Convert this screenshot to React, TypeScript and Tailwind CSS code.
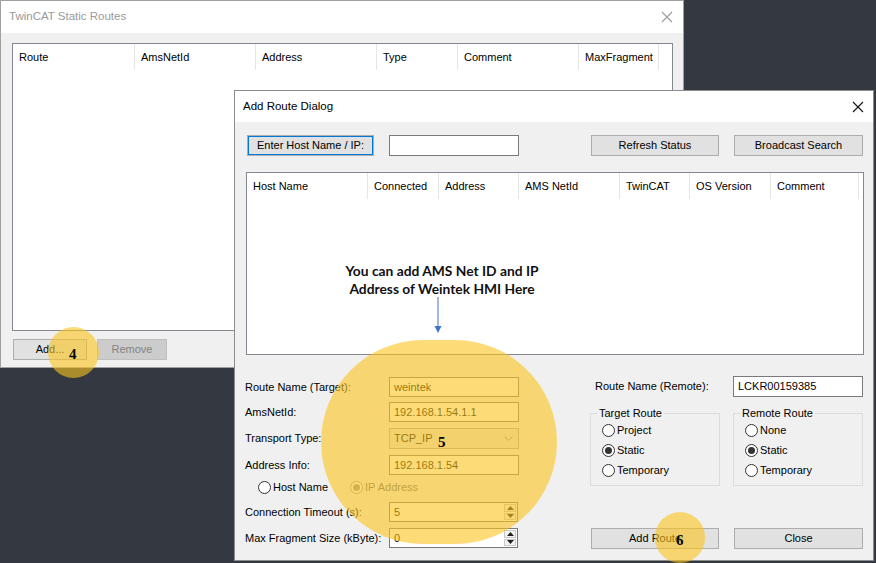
import clsx from "clsx";
import type { ReactNode } from "react";

function CloseX({ color }: { color: string }) {
  return (
    <svg width="12" height="12" viewBox="0 0 12 12">
      <path d="M1 1 L11 11 M11 1 L1 11" stroke={color} strokeWidth="1.1" fill="none" />
    </svg>
  );
}

function Btn({
  children,
  className,
  disabled,
  focused,
}: {
  children: ReactNode;
  className?: string;
  disabled?: boolean;
  focused?: boolean;
}) {
  return (
    <div
      className={clsx(
        "flex items-center justify-center h-[21px] border",
        disabled ? "bg-[#cccccc] border-[#bfbfbf] text-[#838383]" : "bg-[#e1e1e1] border-[#adadad] text-black",
        focused && "border-[#0078d7] shadow-[inset_0_0_0_1px_#0078d7]",
        className
      )}
    >
      {children}
    </div>
  );
}

function TextBox({ value, className }: { value?: string; className?: string }) {
  return (
    <div className={clsx("h-[20px] bg-white border border-[#7a7a7a] flex items-center pl-[4px]", className)}>
      {value}
    </div>
  );
}

function Radio({ label, checked, muted }: { label: string; checked?: boolean; muted?: boolean }) {
  return (
    <div className="flex items-center h-[14px] gap-[2px]">
      <span
        className={clsx(
          "w-[13px] h-[13px] rounded-full border bg-white flex items-center justify-center",
          muted ? "border-[#9a9a9a]" : "border-[#333333]"
        )}
      >
        {checked && <span className={clsx("w-[7px] h-[7px] rounded-full", muted ? "bg-[#9a9a9a]" : "bg-[#333333]")} />}
      </span>
      <span className={muted ? "text-[#6d6d6d]" : "text-black"}>{label}</span>
    </div>
  );
}

function Spin({ value }: { value: string }) {
  return (
    <div className="w-[129px] h-[20px] bg-white border border-[#7a7a7a] flex">
      <span className="flex-1 pl-[4px] flex items-center">{value}</span>
      <div className="w-[14px] flex flex-col gap-[1px] p-[1px]">
        <span className="flex-1 bg-[#f4f4f4] border border-[#c8c8c8] flex items-center justify-center">
          <svg width="7" height="4" viewBox="0 0 7 4">
            <path d="M0 4 L3.5 0 L7 4 Z" fill="#222" />
          </svg>
        </span>
        <span className="flex-1 bg-[#f4f4f4] border border-[#c8c8c8] flex items-center justify-center">
          <svg width="7" height="4" viewBox="0 0 7 4">
            <path d="M0 0 L3.5 4 L7 0 Z" fill="#222" />
          </svg>
        </span>
      </div>
    </div>
  );
}

function GroupBox({ title, items }: { title: string; items: [string, boolean][] }) {
  return (
    <fieldset className="w-[130px] h-[80px] border border-[#dcdcdc] px-0">
      <legend className="ml-[6px] px-[2px] leading-[14px]">{title}</legend>
      <div className="flex flex-col gap-[6px] pl-[11px] pt-[3px]">
        {items.map(([label, checked]) => (
          <Radio key={label} label={label} checked={checked} />
        ))}
      </div>
    </fieldset>
  );
}

function HeaderRow({ cols }: { cols: [string, number][] }) {
  return (
    <div className="flex h-[26px]">
      {cols.map(([name, w]) => (
        <div key={name} className="h-full flex items-center pl-[6px] border-r border-[#e5e5e5]" style={{ width: w }}>
          {name}
        </div>
      ))}
    </div>
  );
}

export default function App() {
  return (
    <div className="relative w-[876px] h-[563px] overflow-hidden bg-[#333841] font-['Liberation_Sans',Arial,sans-serif] text-[11px] text-black">
      {/* TwinCAT Static Routes window */}
      <div className="absolute left-0 top-0 w-[684px] h-[368px] border border-[#a0a0a0] bg-[#f0f0f0] flex flex-col">
        <div className="h-[32px] bg-white flex items-center justify-between pl-[8px] pr-[10px]">
          <span className="text-[11.5px] text-[#9a9a9a]">TwinCAT Static Routes</span>
          <CloseX color="#9a9a9a" />
        </div>
        <div className="flex-1 pl-[11px] pt-[10px]">
          <div className="w-[661px] h-[288px] bg-white border border-[#828790]">
            <HeaderRow
              cols={[
                ["Route", 122],
                ["AmsNetId", 121],
                ["Address", 121],
                ["Type", 81],
                ["Comment", 121],
                ["MaxFragment", 80],
              ]}
            />
          </div>
          <div className="flex mt-[8px] ml-[1px] gap-[10px]">
            <Btn className="w-[74px]">Add...</Btn>
            <Btn className="w-[70px]" disabled>
              Remove
            </Btn>
          </div>
        </div>
        {/* step 4 marker */}
        <div className="absolute left-[47px] top-[326px] w-[51px] h-[51px] rounded-full bg-[rgba(252,196,30,0.6)]" />
        <span className="absolute left-[68px] top-[342px] font-['Liberation_Serif',serif] font-bold text-[15px]">4</span>
      </div>

      {/* Add Route Dialog */}
      <div className="absolute left-[234px] top-[90px] w-[640px] h-[471px] border border-[#8c8c8c] bg-[#f0f0f0] flex flex-col">
        <div className="h-[31px] bg-white flex items-center justify-between pl-[8px] pr-[9px]">
          <span className="text-[11.5px]">Add Route Dialog</span>
          <CloseX color="#111111" />
        </div>
        <div className="flex-1 pl-[10px] pt-[13px]">
          <div className="flex ml-[2px] pr-[10px]">
            <Btn className="w-[127px]" focused>
              Enter Host Name / IP:
            </Btn>
            <TextBox className="ml-[15px] w-[130px] h-[21px]" />
            <Btn className="ml-auto w-[128px]">Refresh Status</Btn>
            <Btn className="ml-[15px] w-[129px]">Broadcast Search</Btn>
          </div>
          <div className="mt-[16px] ml-[1px] w-[618px] h-[183px] bg-white border border-[#828790]">
            <HeaderRow
              cols={[
                ["Host Name", 121],
                ["Connected", 71],
                ["Address", 80],
                ["AMS NetId", 101],
                ["TwinCAT", 70],
                ["OS Version", 81],
                ["Comment", 88],
              ]}
            />
          </div>
          <div className="flex">
            {/* left form */}
            <div className="flex flex-col w-[274px]">
              <div className="flex items-center mt-[22px]">
                <span className="w-[144px]">Route Name (Target):</span>
                <TextBox className="w-[130px]" value="weintek" />
              </div>
              <div className="flex items-center mt-[5px]">
                <span className="w-[144px]">AmsNetId:</span>
                <TextBox className="w-[130px]" value="192.168.1.54.1.1" />
              </div>
              <div className="flex items-center mt-[6px]">
                <span className="w-[144px]">Transport Type:</span>
                <div className="w-[130px] h-[21px] bg-[#e5e5e5] border border-[#adadad] flex items-center pl-[4px] pr-[5px] justify-between">
                  <span>TCP_IP</span>
                  <svg width="9" height="5" viewBox="0 0 9 5">
                    <path d="M0.5 0.5 L4.5 4.5 L8.5 0.5" stroke="#8a8a8a" fill="none" />
                  </svg>
                </div>
              </div>
              <div className="flex items-center mt-[6px]">
                <span className="w-[144px]">Address Info:</span>
                <TextBox className="w-[130px]" value="192.168.1.54" />
              </div>
              <div className="flex items-center mt-[5px] pl-[13px] gap-[22px]">
                <Radio label="Host Name" />
                <Radio label="IP Address" checked muted />
              </div>
              <div className="flex items-center mt-[8px]">
                <span className="w-[144px]">Connection Timeout (s):</span>
                <Spin value="5" />
              </div>
              <div className="flex items-center mt-[6px]">
                <span className="w-[144px]">Max Fragment Size (kByte):</span>
                <Spin value="0" />
              </div>
            </div>
            {/* right form */}
            <div className="flex flex-col ml-[71px] w-[273px]">
              <div className="flex items-center mt-[21px]">
                <span className="w-[143px] pl-[5px]">Route Name (Remote):</span>
                <TextBox className="w-[130px] h-[21px]" value="LCKR00159385" />
              </div>
              <div className="flex mt-[9px] gap-[13px]">
                <GroupBox
                  title="Target Route"
                  items={[
                    ["Project", false],
                    ["Static", true],
                    ["Temporary", false],
                  ]}
                />
                <GroupBox
                  title="Remote Route"
                  items={[
                    ["None", false],
                    ["Static", true],
                    ["Temporary", false],
                  ]}
                />
              </div>
              <div className="flex mt-[42px] ml-[1px] gap-[15px]">
                <Btn className="w-[128px]">Add Route</Btn>
                <Btn className="w-[129px]">Close</Btn>
              </div>
            </div>
          </div>
        </div>

        {/* annotation */}
        <div className="absolute left-[97px] top-[171px] w-[220px] text-center font-['Lato',sans-serif] font-bold text-[13.8px] leading-[18px] text-[#111]">
          You can add AMS Net ID and IP
          <br />
          Address of Weintek HMI Here
        </div>
        <svg className="absolute left-[199px] top-[206px]" width="8" height="37" viewBox="0 0 8 37">
          <path d="M4 0 L4 30" stroke="#4472c4" strokeWidth="1" />
          <path d="M0.5 29 L7.5 29 L4 36 Z" fill="#4472c4" />
        </svg>
        {/* step 5 highlight */}
        <div className="absolute left-[86px] top-[249px] w-[236px] h-[204px] rounded-full bg-[rgba(252,196,30,0.6)]" />
        <span className="absolute left-[203px] top-[340px] font-['Liberation_Serif',serif] font-bold text-[15px]">5</span>
        {/* step 6 marker */}
        <div className="absolute left-[420px] top-[421px] w-[50px] h-[51px] rounded-full bg-[rgba(252,196,30,0.6)]" />
        <span className="absolute left-[441px] top-[438px] font-['Liberation_Serif',serif] font-bold text-[15px]">6</span>
      </div>
    </div>
  );
}
